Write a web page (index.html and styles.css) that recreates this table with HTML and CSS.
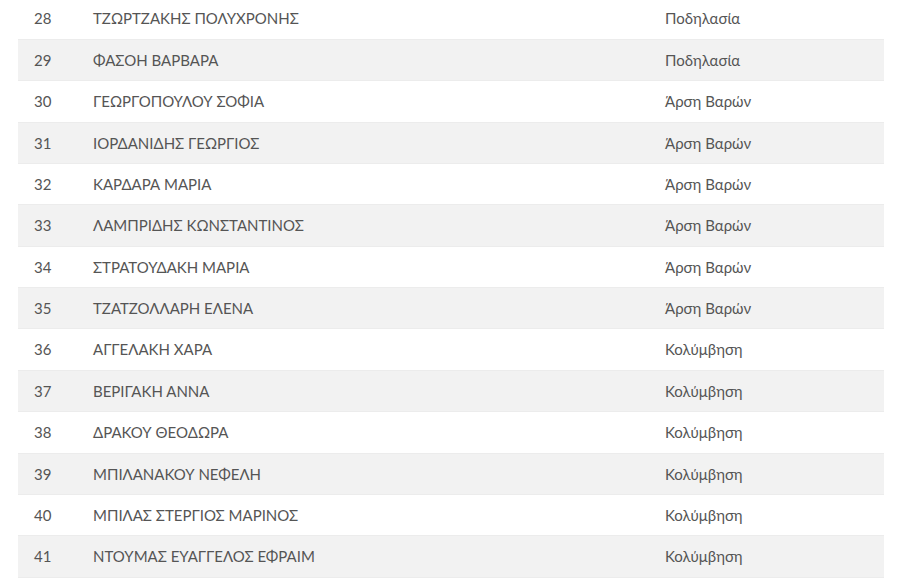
FILE: index.html
```html
<!DOCTYPE html>
<html lang="el">
<head>
<meta charset="utf-8">
<link rel="stylesheet" href="styles.css">
</head>
<body>
<div class="wrap">
<table class="athletes">
<colgroup><col class="c-num"><col class="c-name"><col class="c-sport"></colgroup>
<tbody>
<tr><td>28</td><td>ΤΖΩΡΤΖΑΚΗΣ ΠΟΛΥΧΡΟΝΗΣ</td><td>Ποδηλασία</td></tr>
<tr><td>29</td><td>ΦΑΣΟΗ ΒΑΡΒΑΡΑ</td><td>Ποδηλασία</td></tr>
<tr><td>30</td><td>ΓΕΩΡΓΟΠΟΥΛΟΥ ΣΟΦΙΑ</td><td>Άρση Βαρών</td></tr>
<tr><td>31</td><td>ΙΟΡΔΑΝΙΔΗΣ ΓΕΩΡΓΙΟΣ</td><td>Άρση Βαρών</td></tr>
<tr><td>32</td><td>ΚΑΡΔΑΡΑ ΜΑΡΙΑ</td><td>Άρση Βαρών</td></tr>
<tr><td>33</td><td>ΛΑΜΠΡΙΔΗΣ ΚΩΝΣΤΑΝΤΙΝΟΣ</td><td>Άρση Βαρών</td></tr>
<tr><td>34</td><td>ΣΤΡΑΤΟΥΔΑΚΗ ΜΑΡΙΑ</td><td>Άρση Βαρών</td></tr>
<tr><td>35</td><td>ΤΖΑΤΖΟΛΛΑΡΗ ΕΛΕΝΑ</td><td>Άρση Βαρών</td></tr>
<tr><td>36</td><td>ΑΓΓΕΛΑΚΗ ΧΑΡΑ</td><td>Κολύμβηση</td></tr>
<tr><td>37</td><td>ΒΕΡΙΓΑΚΗ ΑΝΝΑ</td><td>Κολύμβηση</td></tr>
<tr><td>38</td><td>ΔΡΑΚΟΥ ΘΕΟΔΩΡΑ</td><td>Κολύμβηση</td></tr>
<tr><td>39</td><td>ΜΠΙΛΑΝΑΚΟΥ ΝΕΦΕΛΗ</td><td>Κολύμβηση</td></tr>
<tr><td>40</td><td>ΜΠΙΛΑΣ ΣΤΕΡΓΙΟΣ ΜΑΡΙΝΟΣ</td><td>Κολύμβηση</td></tr>
<tr><td>41</td><td>ΝΤΟΥΜΑΣ ΕΥΑΓΓΕΛΟΣ ΕΦΡΑΙΜ</td><td>Κολύμβηση</td></tr>
</tbody>
</table>
</div>
</body>
</html>
```
FILE: styles.css
```css
html, body {
  margin: 0;
  padding: 0;
  background: #fff;
}
body {
  font-family: Lato, "Open Sans", sans-serif;
  font-size: 15px;
  color: #555;
  overflow: hidden;
}
.wrap {
  padding: 0 16px 0 18px;
  margin-top: -1.6px;
}
.athletes {
  width: 100%;
  border-collapse: collapse;
  table-layout: fixed;
}
.c-num { width: 59px; }
.c-name { width: 572px; }
.athletes td {
  padding: 8px 16px;
  line-height: 24.38px;
  border-bottom: 1px solid #ececec;
  text-align: left;
  vertical-align: middle;
  white-space: nowrap;
}
.athletes tr:nth-child(even) td {
  background: #f2f2f2;
}
```
